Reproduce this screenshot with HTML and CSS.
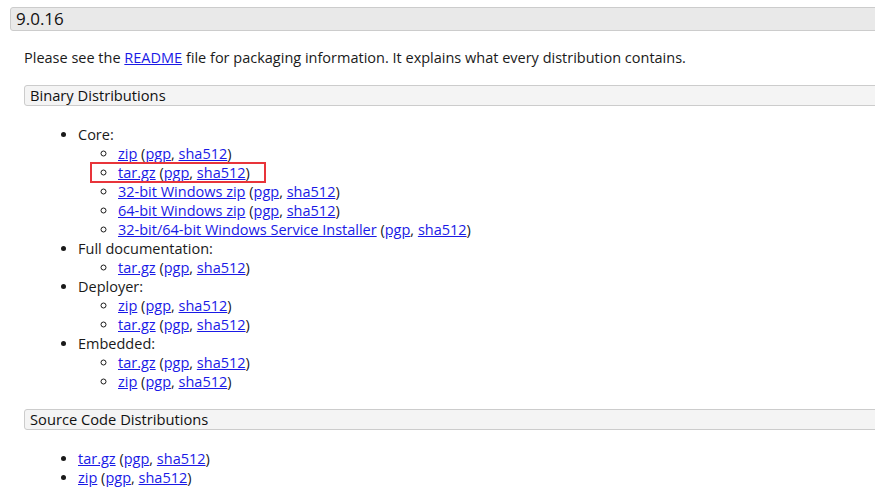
FILE: index.html
```html
<!DOCTYPE html>
<html>
<head>
<meta charset="utf-8">
<link rel="stylesheet" href="styles.css">
</head>
<body>
<div class="page">
  <h3 class="version">9.0.16</h3>
  <div class="content">
    <p class="intro">Please see the <a href="#">README</a> file for packaging information. It explains what every distribution contains.</p>
    <h4 class="section">Binary Distributions</h4>
    <ul class="list">
      <li>Core:
        <ul class="sub">
          <li><a href="#">zip</a> (<a href="#">pgp</a>, <a href="#">sha512</a>)</li>
          <li class="marked"><span class="mark"></span><a href="#">tar.gz</a> (<a href="#">pgp</a>, <a href="#">sha512</a>)</li>
          <li><a href="#">32-bit Windows zip</a> (<a href="#">pgp</a>, <a href="#">sha512</a>)</li>
          <li><a href="#">64-bit Windows zip</a> (<a href="#">pgp</a>, <a href="#">sha512</a>)</li>
          <li><a href="#">32-bit/64-bit Windows Service Installer</a> (<a href="#">pgp</a>, <a href="#">sha512</a>)</li>
        </ul>
      </li>
      <li>Full documentation:
        <ul class="sub">
          <li><a href="#">tar.gz</a> (<a href="#">pgp</a>, <a href="#">sha512</a>)</li>
        </ul>
      </li>
      <li>Deployer:
        <ul class="sub">
          <li><a href="#">zip</a> (<a href="#">pgp</a>, <a href="#">sha512</a>)</li>
          <li><a href="#">tar.gz</a> (<a href="#">pgp</a>, <a href="#">sha512</a>)</li>
        </ul>
      </li>
      <li>Embedded:
        <ul class="sub">
          <li><a href="#">tar.gz</a> (<a href="#">pgp</a>, <a href="#">sha512</a>)</li>
          <li><a href="#">zip</a> (<a href="#">pgp</a>, <a href="#">sha512</a>)</li>
        </ul>
      </li>
    </ul>
    <h4 class="section">Source Code Distributions</h4>
    <ul class="list">
      <li><a href="#">tar.gz</a> (<a href="#">pgp</a>, <a href="#">sha512</a>)</li>
      <li><a href="#">zip</a> (<a href="#">pgp</a>, <a href="#">sha512</a>)</li>
    </ul>
  </div>
</div>
</body>
</html>
```
FILE: styles.css
```css
html, body {
  margin: 0;
  padding: 0;
  background: #fff;
}
body {
  font-family: "Open Sans", "Liberation Sans", sans-serif;
  font-size: 14.5px;
  line-height: 19px;
  color: #1a1a1a;
  overflow: hidden;
}
a {
  color: #1a1ae6;
  text-decoration: underline;
}
.page {
  padding: 7px 0 0 10px;
}
.version {
  margin: 0 -20px 0 0;
  height: 22px;
  line-height: 22px;
  padding-left: 5px;
  font-size: 17px;
  font-weight: normal;
  color: #111;
  background: #e9e9e9;
  border: 1px solid #cccccc;
  border-radius: 3px 0 0 3px;
}
.content {
  padding-left: 14px;
}
.intro {
  margin: 17px 0 18px 0;
}
.section {
  margin: 0 -20px 0 0;
  height: 19px;
  line-height: 19px;
  padding-left: 5px;
  font-size: 14.7px;
  font-weight: normal;
  color: #111;
  background: #f4f4f4;
  border: 1px solid #cccccc;
  border-radius: 3px 0 0 3px;
}
.list {
  margin: 19px 0 18px 14px;
  padding-left: 40px;
  list-style: disc;
}
.sub {
  margin: 0;
  padding-left: 40px;
  list-style: circle;
}
.marked {
  position: relative;
}
.mark {
  position: absolute;
  left: -28px;
  top: -1px;
  width: 172px;
  height: 17px;
  border: 2px solid #e8343a;
  pointer-events: none;
}
```
